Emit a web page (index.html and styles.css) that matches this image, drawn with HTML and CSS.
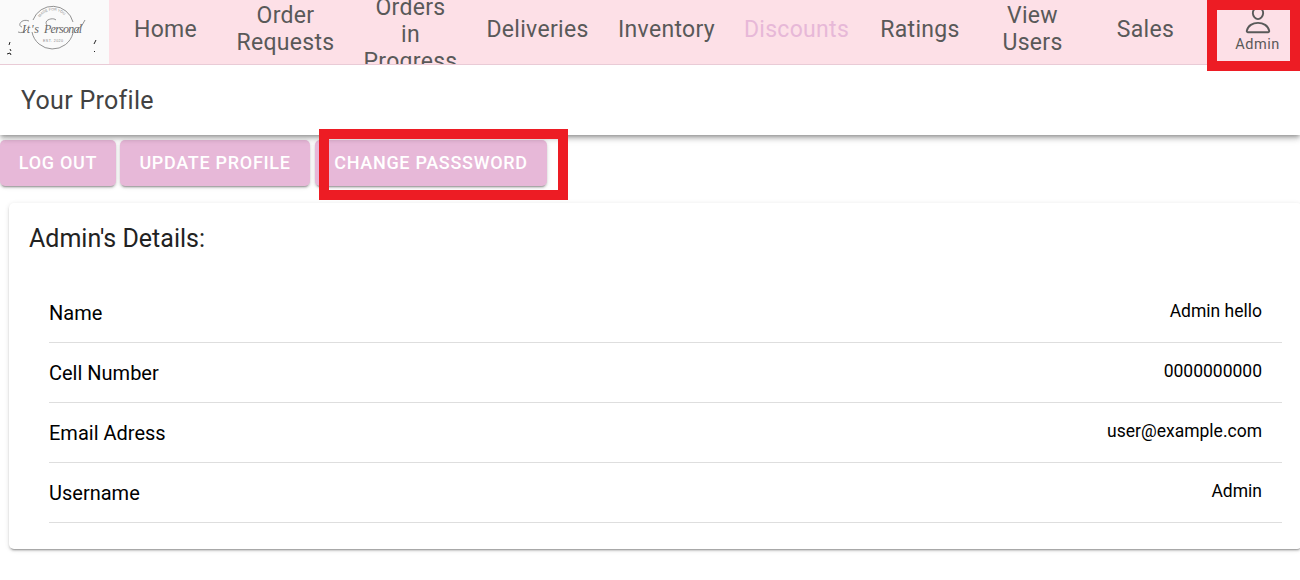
FILE: index.html
```html
<!DOCTYPE html>
<html lang="en">
<head>
<meta charset="utf-8">
<title>Your Profile</title>
<link rel="stylesheet" href="styles.css">
</head>
<body>
<nav class="tabs">
  <a class="logo">
    <svg width="109" height="64" viewBox="0 0 109 64">
      <g fill="none" stroke="#777" stroke-width=".8">
        <path d="M33 20A21 21 0 0 1 73 22M32 32A21 21 0 0 0 73 33"/>
        <path d="M29 21C21 18 17 26 22 27M18 32q5 2 9-3M47 25C43 20 53 17 56 20M76 31Q83 26 85 20"/>
      </g>
      <path id="arc" d="M38 21A16 16 0 0 1 68 21" fill="none"/>
      <text class="logo-small"><textPath href="#arc" startOffset="4">MADE FOR YOU</textPath></text>
      <text class="logo-script" y="33"><tspan x="22" textLength="17">It's</tspan><tspan x="44" textLength="38">Personal</tspan></text>
      <text class="logo-small" x="43" y="41.500" textLength="20">EST. 2020</text>
      <path d="M10 42l-1 3M10 49l1 2M7 54l3-1 1 2M96 40l-2 4M94 51l1 1" stroke="#222" fill="none"/>
    </svg>
  </a>
  <a class="tab">Home</a>
  <a class="tab">Order<br>Requests</a>
  <a class="tab tall">Orders<br>in<br>Progress</a>
  <a class="tab">Deliveries</a>
  <a class="tab">Inventory</a>
  <a class="tab selected">Discounts</a>
  <a class="tab">Ratings</a>
  <a class="tab">View<br>Users</a>
  <a class="tab">Sales</a>
  <a class="tab account">
    <svg width="30" height="30" viewBox="0 0 512 512" fill="none" stroke="#595959" stroke-width="32" stroke-linejoin="round"><path d="M344 144c-3.920 52.870-44 96-88 96s-84.150-43.120-88-96c-4-55 35-96 88-96s92 42 88 96z"/><path d="M256 304c-87 0-175.300 48-191.640 138.600C62.390 453.520 68.570 464 80 464h352c11.440 0 17.620-10.480 15.650-21.400C431.300 352 343 304 256 304z"/></svg>
    <span>Admin</span>
  </a>
  <i class="mark mark-account"></i>
</nav>
<header class="title">Your Profile</header>
<main>
  <div class="actions">
    <button class="btn logout">Log out</button>
    <button class="btn update">Update Profile</button>
    <button class="btn change">Change Passsword</button>
    <i class="mark mark-password"></i>
  </div>
  <section class="card">
    <h2>Admin's Details:</h2>
    <dl>
      <div class="row"><dt>Name</dt><dd>Admin hello</dd></div>
      <div class="row"><dt>Cell Number</dt><dd>0000000000</dd></div>
      <div class="row"><dt>Email Adress</dt><dd>user@example.com</dd></div>
      <div class="row"><dt>Username</dt><dd>Admin</dd></div>
    </dl>
  </section>
</main>
</body>
</html>
```
FILE: styles.css
```css
* { box-sizing: border-box; }
body { margin: 0; height: 580px; overflow: hidden; background: #fff; color: #000; font-family: Roboto, sans-serif; }
.tabs { position: relative; z-index: 3; display: grid; grid-template-columns: 109px 112px 128px 122px 132px 126px 134px 113px 112px 114px 98px; height: 65px; background: #fde0e7; border-bottom: 1px solid #e9cbd6; }
.logo { height: 64px; background: #fafafa; }
.logo svg { display: block; }
.logo-script { font: italic 12px "Liberation Serif", serif; fill: #666; }
.logo-small { font: 3.600px "Liberation Sans", sans-serif; fill: #888; }
.tab { display: flex; align-items: center; justify-content: center; height: 64px; padding: 0 0 6px 1px; overflow: hidden; text-align: center; font-size: 23px; line-height: 27px; letter-spacing: .3px; color: #595959; }
.tall { align-items: flex-start; height: 70px; margin-top: -6px; }
.selected { color: #e7b8d8; }
.account { flex-direction: column; justify-content: flex-start; padding: 5px 0 0 13px; font-size: 14.500px; line-height: 19px; letter-spacing: .5px; }
.account svg { flex: none; }
.mark { position: absolute; border: 10px solid #ed1c24; }
.mark-account { left: 1207px; top: 0; width: 93px; height: 71px; }
.mark-password { left: 319px; top: -6px; width: 249px; height: 71px; z-index: 2; }
.title { position: relative; z-index: 1; height: 70px; padding-left: 21px; background: #fff; line-height: 72px; font-size: 25px; letter-spacing: .3px; color: #424242; box-shadow: 0 2px 4px -1px rgba(0,0,0,.3), 0 4px 5px rgba(0,0,0,.14), 0 1px 10px rgba(0,0,0,.14); }
.actions { display: flex; height: 68px; padding-top: 5px; position: relative; }
.btn { height: 46px; padding: 0; border: 0; border-radius: 5px; background: #e7b8d8; color: #fff; font: 500 18px/46px Roboto, sans-serif; letter-spacing: .7px; text-transform: uppercase; box-shadow: 0 3px 1px -2px rgba(0,0,0,.2), 0 2px 2px rgba(0,0,0,.14), 0 1px 5px rgba(0,0,0,.12); }
.logout { width: 116px; margin-right: 4px; }
.update { width: 190px; margin-right: 5px; }
.change { width: 232px; }
.card { width: 1293px; height: 346px; margin-left: 9px; padding: 21px 20px 0; border-radius: 5px; background: #fff; box-shadow: 0 3px 1px -2px rgba(0,0,0,.2), 0 2px 2px rgba(0,0,0,.14), 0 1px 5px rgba(0,0,0,.12); }
h2 { margin: 0; font-size: 25px; line-height: 30px; font-weight: 400; color: #222; }
dl { margin: 29px 0 0 20px; }
.row { display: flex; justify-content: space-between; height: 60px; padding-right: 20px; border-bottom: 1px solid #dedede; line-height: 60px; }
dt { font-size: 20px; }
dd { margin: -2px 0 0; font-size: 17.500px; }
```
